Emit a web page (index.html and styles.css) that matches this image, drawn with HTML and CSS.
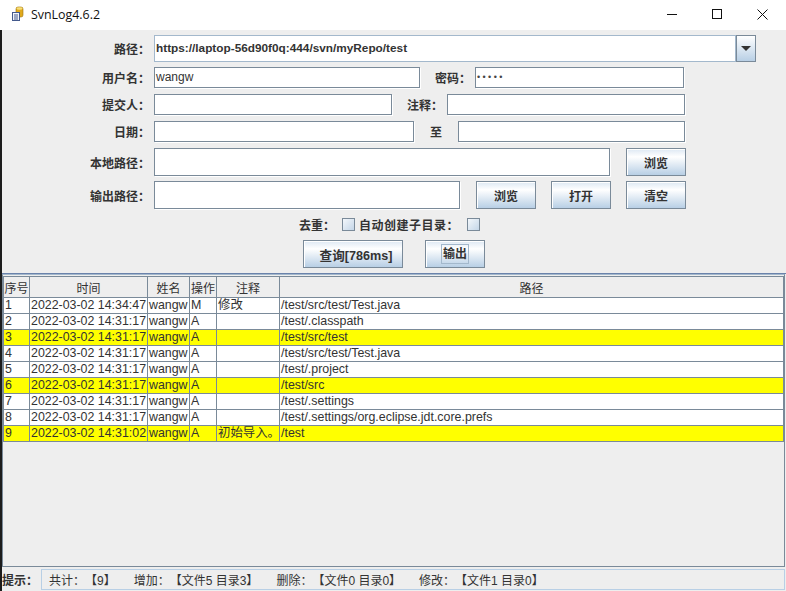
FILE: index.html
```html
<!DOCTYPE html>
<html lang="zh-CN">
  <head>
    <meta charset="UTF-8">
    <title>SvnLog4.6.2</title>
    <link rel="stylesheet" href="styles.css">
  </head>
  <body>
    <header class="titlebar">
      <svg class="app-icon" width="16" height="16" viewBox="0 0 16 16">
        <rect x="6" y="1" width="7" height="10" rx="2" fill="#e0a91c" stroke="#9a7410" stroke-width="0.6"/>
        <ellipse cx="9.5" cy="2.5" rx="3" ry="1.3" fill="#f7df7a"/>
        <rect x="2.5" y="6.5" width="7" height="8" fill="#f2f5fb" stroke="#44598c"/>
        <path d="M4 9h4M4 11h4M4 13h4" stroke="#44598c" fill="none"/>
      </svg>
      <span class="app-title">SvnLog4.6.2</span>
      <svg class="win-btn min" width="10" height="10" viewBox="0 0 10 10"><path d="M0 5.5h10" stroke="#111" fill="none"/></svg>
      <svg class="win-btn max" width="10" height="10" viewBox="0 0 10 10"><rect x="0.5" y="0.5" width="9" height="9" stroke="#111" fill="none"/></svg>
      <svg class="win-btn close" width="11" height="11" viewBox="0 0 11 11"><path d="M0.5 0.5l10 10M10.5 0.5l-10 10" stroke="#111" fill="none"/></svg>
    </header>

    <main class="app">
      <form class="search">
        <div class="row row-path">
          <label class="lbl">路径：</label>
          <div class="combo">
            <div class="combo-text">https://laptop-56d90f0q:444/svn/myRepo/test</div>
            <div class="combo-arrow"><i></i></div>
          </div>
        </div>
        <div class="row row-user">
          <label class="lbl">用户名：</label>
          <div class="field w-user">wangw</div>
          <label class="lbl-inline w-pw">密码：</label>
          <div class="field w-pass">•••••</div>
        </div>
        <div class="row row-commit">
          <label class="lbl">提交人：</label>
          <div class="field w-committer"></div>
          <label class="lbl-inline w-note">注释：</label>
          <div class="field w-comment"></div>
        </div>
        <div class="row row-date">
          <label class="lbl">日期：</label>
          <div class="field w-from"></div>
          <label class="lbl-inline w-to">至</label>
          <div class="field w-until"></div>
        </div>
        <div class="row row-local">
          <label class="lbl">本地路径：</label>
          <div class="field w-local"></div>
          <button type="button" class="btn">浏览</button>
        </div>
        <div class="row row-output">
          <label class="lbl">输出路径：</label>
          <div class="field w-output"></div>
          <button type="button" class="btn">浏览</button>
          <button type="button" class="btn">打开</button>
          <button type="button" class="btn">清空</button>
        </div>
        <div class="row row-checks">
          <span class="check-label">去重：</span>
          <i class="check check-dedupe"></i>
          <span class="check-label check-label-wide">自动创建子目录：</span>
          <i class="check check-subdir"></i>
        </div>
        <div class="row row-actions">
          <button type="button" class="btn btn-query">查询[786ms]</button>
          <button type="button" class="btn btn-export"><span>输出</span></button>
        </div>
      </form>

      <section class="results">
        <table class="log">
          <colgroup>
            <col class="c-no"><col class="c-time"><col class="c-name"><col class="c-op"><col class="c-note"><col>
          </colgroup>
          <thead>
            <tr><th>序号</th><th>时间</th><th>姓名</th><th>操作</th><th>注释</th><th>路径</th></tr>
          </thead>
          <tbody>
            <tr><td>1</td><td>2022-03-02 14:34:47</td><td>wangw</td><td>M</td><td>修改</td><td>/test/src/test/Test.java</td></tr>
            <tr><td>2</td><td>2022-03-02 14:31:17</td><td>wangw</td><td>A</td><td></td><td>/test/.classpath</td></tr>
            <tr class="dir"><td>3</td><td>2022-03-02 14:31:17</td><td>wangw</td><td>A</td><td></td><td>/test/src/test</td></tr>
            <tr><td>4</td><td>2022-03-02 14:31:17</td><td>wangw</td><td>A</td><td></td><td>/test/src/test/Test.java</td></tr>
            <tr><td>5</td><td>2022-03-02 14:31:17</td><td>wangw</td><td>A</td><td></td><td>/test/.project</td></tr>
            <tr class="dir"><td>6</td><td>2022-03-02 14:31:17</td><td>wangw</td><td>A</td><td></td><td>/test/src</td></tr>
            <tr><td>7</td><td>2022-03-02 14:31:17</td><td>wangw</td><td>A</td><td></td><td>/test/.settings</td></tr>
            <tr><td>8</td><td>2022-03-02 14:31:17</td><td>wangw</td><td>A</td><td></td><td>/test/.settings/org.eclipse.jdt.core.prefs</td></tr>
            <tr class="dir"><td>9</td><td>2022-03-02 14:31:02</td><td>wangw</td><td>A</td><td>初始导入。</td><td>/test</td></tr>
          </tbody>
        </table>
      </section>

      <footer class="status">
        <span class="status-label">提示：</span>
        <div class="status-box">
          <span>共计：【9】</span>
          <span>增加：【文件5 目录3】</span>
          <span>删除：【文件0 目录0】</span>
          <span>修改：【文件1 目录0】</span>
        </div>
      </footer>
    </main>
  </body>
</html>
```

FILE: styles.css
```css
* {
  box-sizing: border-box;
}
html, body {
  margin: 0;
  height: 100%;
  overflow: hidden;
}
body {
  display: flex;
  flex-direction: column;
  background: #fff;
  color: #333;
  font-family: "Liberation Sans", "Noto Sans CJK SC", sans-serif;
  font-size: 12px;
  text-spacing-trim: space-all;
}

/* title bar */
.titlebar {
  height: 30px;
  flex-shrink: 0;
  display: flex;
  align-items: center;
  padding: 0 18px 2px 10px;
  background: #fff;
}
.app-icon {
  margin-right: 5px;
}
.app-title {
  font-family: "Open Sans", "Noto Sans", sans-serif;
  font-size: 12.4px;
  color: #111;
  flex: 1;
}
.win-btn.min { margin-right: 35px; }
.win-btn.max { margin-right: 35px; }

.app {
  flex: 1;
  display: flex;
  flex-direction: column;
  background: #eee;
  border-left: 2px solid #1c1c1c;
  min-height: 0;
}

/* form */
.search {
  height: 244px;
  flex-shrink: 0;
  padding-top: 5px;
  border-bottom: 1px solid #6a82ab;
}
.row {
  display: flex;
  align-items: center;
}
.row-path { height: 27px; }
.row-user { height: 21px; margin-top: 5px; }
.row-commit { height: 21px; margin-top: 6px; }
.row-date { height: 21px; margin-top: 6px; }
.row-local { height: 28px; margin-top: 6px; }
.row-output { height: 28px; margin-top: 5px; }
.row-checks { height: 14px; margin-top: 8px; margin-left: 297px; }
.row-actions { height: 28px; margin-top: 9px; margin-left: 301px; }

.lbl {
  width: 148px;
  margin-right: 4px;
  text-align: right;
  font-weight: bold;
  white-space: nowrap;
}
.lbl-inline {
  font-weight: bold;
  white-space: nowrap;
  text-align: right;
}
.field {
  height: 100%;
  background: #fff;
  border: 1px solid #7a8a99;
  box-shadow: 1px 1px 0 #fff;
  padding: 0 1px;
  line-height: 19px;
}

.w-user { width: 266px; }
.w-pw { width: 51px; margin-right: 4px; }
.w-pass { width: 209px; font-size: 9px; letter-spacing: 2.4px; color: #444; }
.w-committer { width: 238px; }
.w-note { width: 51px; margin-right: 4px; }
.w-comment { width: 238px; }
.w-from { width: 260px; }
.w-to { width: 28px; margin-right: 16px; }
.w-until { width: 227px; }
.w-local { width: 456px; margin-right: 16px; }
.w-output { width: 306px; margin-right: 16px; }

.combo {
  width: 602px;
  height: 100%;
  display: flex;
}
.combo-text {
  flex: 1;
  background: #fff;
  border: 1px solid #a3b8cc;
  box-shadow: inset 0 0 0 1px #fff;
  padding-left: 1px;
  font-weight: bold;
  font-size: 11.8px;
  line-height: 24px;
}
.combo-arrow {
  width: 20px;
  display: flex;
  align-items: center;
  justify-content: center;
  border: 1px solid #7a8a99;
  background: linear-gradient(#fff, #b8cfe5);
}
.combo-arrow i {
  width: 0;
  height: 0;
  border-left: 5px solid transparent;
  border-right: 5px solid transparent;
  border-top: 5px solid #333;
}

.btn {
  width: 60px;
  height: 28px;
  padding: 0;
  margin-right: 15px;
  border: 1px solid #7a8a99;
  background: linear-gradient(#dde8f3, #fff 30%, #b8cfe5);
  box-shadow: inset 1px 1px 0 #fff;
  color: #333;
  font-family: inherit;
  font-size: 12px;
  font-weight: bold;
}
.btn-query {
  width: 100px;
  margin-right: 22px;
  padding-left: 6px;
  font-size: 12.6px;
}
.btn-export span {
  display: inline-block;
  width: 28px;
  height: 20px;
  line-height: 18px;
  border: 1px solid #a3b8cc;
}

.check-label {
  font-weight: bold;
  white-space: nowrap;
}
.check-label-wide {
  letter-spacing: 0.5px;
}
.check {
  width: 13px;
  height: 13px;
  border: 1px solid #7a8a99;
  background: linear-gradient(135deg, #f3f7fb, #c4d6e8);
}
.check-dedupe { margin: 0 4px 0 7px; }
.check-subdir { margin-left: 8px; }

/* table */
.results {
  flex: 1;
  min-height: 0;
  margin: 0 1px 0 0;
  border: 1px solid #7a8a99;
  border-top-color: #a3b8cc;
  padding-top: 1px;
}
.log {
  width: 100%;
  table-layout: fixed;
  border-collapse: collapse;
  font-size: 12.4px;
  color: #333;
}
.c-no { width: 26px; }
.c-time { width: 118px; }
.c-name { width: 42px; }
.c-op { width: 27px; }
.c-note { width: 63px; }
.log th {
  height: 21px;
  padding: 0;
  font-size: 12px;
  font-weight: normal;
  text-align: center;
  border: 1px solid #7a8a99;
  background: #eee;
}
.log td {
  height: 16px;
  padding: 0 1px;
  line-height: 15px;
  white-space: nowrap;
  overflow: hidden;
  background: #fff;
  border: 1px solid #7a8a99;
}
.log .dir td {
  background: #ff0;
}

/* status */
.status {
  height: 24px;
  flex-shrink: 0;
  display: flex;
  align-items: stretch;
  padding: 2px 1px 1px 0;
}
.status-label {
  width: 39px;
  padding-top: 2px;
  font-weight: bold;
  line-height: 21px;
}
.status-box {
  flex: 1;
  display: flex;
  gap: 18px;
  align-items: center;
  padding-left: 7px;
  border: 1px solid #b8cfe5;
  color: #333;
}
```
